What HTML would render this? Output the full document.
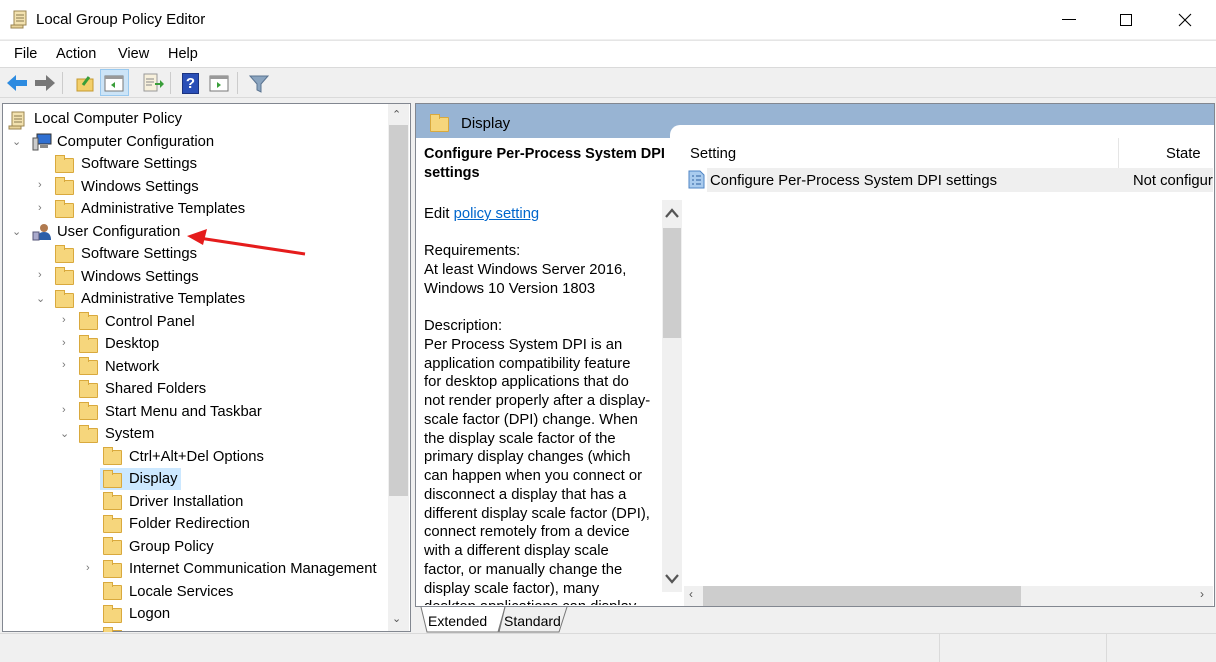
<!DOCTYPE html>
<html><head><meta charset="utf-8"><style>
*{margin:0;padding:0;box-sizing:border-box}
body{width:1216px;height:662px;overflow:hidden;background:#f0f0f0;font-family:"Liberation Sans",sans-serif;font-size:14.5px;color:#000;position:relative}
.a{position:absolute;white-space:nowrap}
.fold{position:absolute;width:19px;height:15px;background:#f6d67c;border:1px solid #d9a93d;border-radius:1px}
.fold:before{content:"";position:absolute;left:-1px;top:-4px;width:8px;height:4px;background:#f6d67c;border:1px solid #d9a93d;border-bottom:none}
.exp{position:absolute;font-size:11px;color:#777}
.t{position:absolute;white-space:nowrap;line-height:18px;font-size:14.8px}
</style></head><body>
<div class="a" style="left:0;top:0;width:1216px;height:39px;background:#fff;border-bottom:1px solid #fff"></div>
<svg class="a" style="left:10px;top:9px" width="18" height="20"><path d="M4 2h12v14H4z" fill="#f3e2b0" stroke="#9b8550"/><path d="M6 6h8M6 9h8M6 12h8" stroke="#8a7a50"/><path d="M1 16h12v3H1z" fill="#e8d39a" stroke="#9b8550"/></svg>
<div class="a" style="left:36px;top:11px;font-size:15px">Local Group Policy Editor</div>
<div class="a" style="left:1062px;top:19px;width:14px;height:1px;background:#000"></div>
<div class="a" style="left:1120px;top:14px;width:12px;height:12px;border:1px solid #000"></div>
<svg class="a" style="left:1178px;top:13px" width="14" height="14"><path d="M1 1L13 13M13 1L1 13" stroke="#000" stroke-width="1.1"/></svg>
<div class="a" style="left:0;top:40px;width:1216px;height:27px;background:#fff;border-top:1px solid #e5e5e5"></div>
<div class="a" style="left:14px;top:46px">File</div>
<div class="a" style="left:56px;top:46px">Action</div>
<div class="a" style="left:118px;top:46px">View</div>
<div class="a" style="left:168px;top:46px">Help</div>
<div class="a" style="left:0;top:67px;width:1216px;height:1px;background:#dadada"></div>
<svg class="a" style="left:6px;top:73px" width="22" height="20"><path d="M1 10L10 2v5h11v6H10v5z" fill="#2d8be0"/></svg>
<svg class="a" style="left:34px;top:73px" width="22" height="20"><path d="M21 10L12 2v5H1v6h11v5z" fill="#777"/></svg>
<div class="a" style="left:62px;top:72px;width:1px;height:22px;background:#ccc"></div>
<svg class="a" style="left:75px;top:73px" width="20" height="20"><rect x="2" y="6" width="16" height="12" fill="#f3cf6a" stroke="#c49a2f"/><path d="M8 12l6-8" stroke="#3a9e3a" stroke-width="3"/></svg>
<div class="a" style="left:100px;top:69px;width:29px;height:27px;background:#cce4f7;border:1px solid #99c9ef"></div>
<svg class="a" style="left:104px;top:75px" width="20" height="17"><rect x="1" y="1" width="18" height="15" fill="#fff" stroke="#777"/><rect x="1" y="1" width="18" height="3" fill="#999"/><path d="M11 7v6l-4-3z" fill="#3a9e3a"/></svg>
<svg class="a" style="left:142px;top:73px" width="22" height="20"><rect x="2" y="1" width="13" height="17" fill="#f7f0dc" stroke="#999"/><path d="M4 6h8M4 9h8M4 12h6" stroke="#888"/><path d="M13 10h5v-3l4 4-4 4v-3h-5z" fill="#3a9e3a"/></svg>
<div class="a" style="left:170px;top:72px;width:1px;height:22px;background:#ccc"></div>
<div class="a" style="left:182px;top:73px;width:17px;height:21px;background:#2a4fb7;border:1px solid #1b3380;color:#fff;font-weight:bold;font-size:15px;text-align:center;line-height:19px">?</div>
<svg class="a" style="left:209px;top:75px" width="20" height="17"><rect x="1" y="1" width="18" height="15" fill="#fff" stroke="#777"/><rect x="1" y="1" width="18" height="3" fill="#999"/><path d="M8 7v6l4-3z" fill="#3a9e3a"/></svg>
<div class="a" style="left:237px;top:72px;width:1px;height:22px;background:#ccc"></div>
<svg class="a" style="left:249px;top:74px" width="20" height="20"><path d="M1 2h18l-7 8v8l-4-2v-6z" fill="#8aa4bf" stroke="#5a7390"/></svg>
<div class="a" style="left:0;top:97px;width:1216px;height:1px;background:#dadada"></div>
<div class="a" style="left:2px;top:103px;width:409px;height:529px;background:#fff;border:1px solid #828790"></div>
<div class="a" style="left:388px;top:104px;width:21px;height:527px;background:#f0f0f0"></div>
<div class="a" style="left:389px;top:125px;width:19px;height:371px;background:#cdcdcd"></div>
<div class="a" style="left:392px;top:108px;font-size:11px;color:#555">&#8963;</div>
<div class="a" style="left:392px;top:612px;font-size:11px;color:#555">&#8964;</div>
<svg class="a" style="left:8px;top:110px" width="18" height="20"><path d="M4 2h12v14H4z" fill="#f3e2b0" stroke="#9b8550"/><path d="M6 6h8M6 9h8M6 12h8" stroke="#8a7a50"/><path d="M1 16h12v3H1z" fill="#e8d39a" stroke="#9b8550"/></svg>
<div class="t" style="left:34px;top:110px">Local Computer Policy</div>
<svg class="a" style="left:32px;top:133px" width="20" height="18"><rect x="5" y="1" width="14" height="10" fill="#2f6fd1" stroke="#333"/><rect x="1" y="5" width="5" height="12" fill="#ccc" stroke="#555"/><rect x="8" y="12" width="8" height="3" fill="#888"/></svg>
<div class="exp" style="left:12px;top:135px">&#8964;</div>
<div class="t" style="left:57px;top:133px">Computer Configuration</div>
<svg class="a" style="left:32px;top:223px" width="20" height="18"><circle cx="12" cy="5" r="4" fill="#b07a4f"/><path d="M5 17c0-6 3-8 7-8s7 2 7 8z" fill="#2b5ea8"/><rect x="1" y="9" width="6" height="8" fill="#aac" stroke="#557"/></svg>
<div class="exp" style="left:12px;top:225px">&#8964;</div>
<div class="t" style="left:57px;top:223px">User Configuration</div>

<div class="fold" style="left:55px;top:158px"></div><div class="t" style="left:81px;top:155px">Software Settings</div>
<div class="exp" style="left:38px;top:179px">&#8250;</div><div class="fold" style="left:55px;top:180px"></div><div class="t" style="left:81px;top:178px">Windows Settings</div>
<div class="exp" style="left:38px;top:202px">&#8250;</div><div class="fold" style="left:55px;top:203px"></div><div class="t" style="left:81px;top:200px">Administrative Templates</div>
<div class="fold" style="left:55px;top:248px"></div><div class="t" style="left:81px;top:245px">Software Settings</div>
<div class="exp" style="left:38px;top:269px">&#8250;</div><div class="fold" style="left:55px;top:270px"></div><div class="t" style="left:81px;top:268px">Windows Settings</div>
<div class="exp" style="left:36px;top:292px">&#8964;</div><div class="fold" style="left:55px;top:293px"></div><div class="t" style="left:81px;top:290px">Administrative Templates</div>
<div class="exp" style="left:62px;top:314px">&#8250;</div><div class="fold" style="left:79px;top:315px"></div><div class="t" style="left:105px;top:313px">Control Panel</div>
<div class="exp" style="left:62px;top:337px">&#8250;</div><div class="fold" style="left:79px;top:338px"></div><div class="t" style="left:105px;top:335px">Desktop</div>
<div class="exp" style="left:62px;top:359px">&#8250;</div><div class="fold" style="left:79px;top:360px"></div><div class="t" style="left:105px;top:358px">Network</div>
<div class="fold" style="left:79px;top:383px"></div><div class="t" style="left:105px;top:380px">Shared Folders</div>
<div class="exp" style="left:62px;top:404px">&#8250;</div><div class="fold" style="left:79px;top:405px"></div><div class="t" style="left:105px;top:403px">Start Menu and Taskbar</div>
<div class="exp" style="left:60px;top:427px">&#8964;</div><div class="fold" style="left:79px;top:428px"></div><div class="t" style="left:105px;top:425px">System</div>
<div class="fold" style="left:103px;top:450px"></div><div class="t" style="left:129px;top:448px">Ctrl+Alt+Del Options</div>
<div class="a" style="left:100px;top:468px;width:81px;height:22px;background:#cce8ff"></div>
<div class="fold" style="left:103px;top:473px"></div><div class="t" style="left:129px;top:470px">Display</div>
<div class="fold" style="left:103px;top:495px"></div><div class="t" style="left:129px;top:493px">Driver Installation</div>
<div class="fold" style="left:103px;top:518px"></div><div class="t" style="left:129px;top:515px">Folder Redirection</div>
<div class="fold" style="left:103px;top:540px"></div><div class="t" style="left:129px;top:538px">Group Policy</div>
<div class="exp" style="left:86px;top:562px">&#8250;</div><div class="fold" style="left:103px;top:563px"></div><div class="t" style="left:129px;top:560px">Internet Communication Management</div>
<div class="fold" style="left:103px;top:585px"></div><div class="t" style="left:129px;top:583px">Locale Services</div>
<div class="fold" style="left:103px;top:608px"></div><div class="t" style="left:129px;top:605px">Logon</div>
<div class="fold" style="left:103px;top:630px;height:1px;border-bottom:none"></div>
<svg class="a" style="left:185px;top:226px" width="125" height="35"><path d="M120 28L14 12" stroke="#e51c1c" stroke-width="3"/><path d="M2 10L22 3L18 19z" fill="#e51c1c"/></svg>

<div class="a" style="left:415px;top:103px;width:800px;height:504px;background:#fff;border:1px solid #828790"></div>
<div class="a" style="left:416px;top:104px;width:798px;height:34px;background:#98b4d3"></div>
<div class="a" style="left:670px;top:125px;width:544px;height:20px;background:#fff;border-top-left-radius:10px"></div>
<div class="fold" style="left:430px;top:117px"></div>
<div class="a" style="left:461px;top:115px;font-size:15px">Display</div>
<div class="t" style="left:424px;top:145px;font-weight:bold;font-size:14.5px;line-height:18.5px">Configure Per-Process System DPI<br>settings</div>
<div class="t" style="left:424px;top:205px">Edit <span style="color:#0066cc;text-decoration:underline">policy setting </span></div>
<div class="t" style="left:424px;top:242px;line-height:18.75px">Requirements:<br>At least Windows Server 2016,<br>Windows 10 Version 1803</div>
<div class="t" style="left:424px;top:317px;line-height:18.75px;height:288px;overflow:hidden">Description:<br>Per Process System DPI is an<br>application compatibility feature<br>for desktop applications that do<br>not render properly after a display-<br>scale factor (DPI) change. When<br>the display scale factor of the<br>primary display changes (which<br>can happen when you connect or<br>disconnect a display that has a<br>different display scale factor (DPI),<br>connect remotely from a device<br>with a different display scale<br>factor, or manually change the<br>display scale factor), many<br>desktop applications can display</div>
<div class="a" style="left:662px;top:200px;width:20px;height:392px;background:#f0f0f0"></div>
<div class="a" style="left:663px;top:228px;width:18px;height:110px;background:#cdcdcd"></div>
<svg class="a" style="left:664px;top:207px" width="16" height="12"><path d="M2 10L8 3L14 10" stroke="#555" stroke-width="2.2" fill="none"/></svg>
<svg class="a" style="left:664px;top:573px" width="16" height="12"><path d="M2 2L8 9L14 2" stroke="#555" stroke-width="2.2" fill="none"/></svg>
<div class="a" style="left:690px;top:146px;font-size:14.8px">Setting</div>
<div class="a" style="left:1118px;top:138px;width:1px;height:30px;background:#e5e5e5"></div>
<div class="a" style="left:1166px;top:146px;font-size:14.8px">State</div>
<div class="a" style="left:707px;top:168px;width:506px;height:24px;background:#efefef"></div>
<svg class="a" style="left:688px;top:170px" width="17" height="19"><path d="M1 1h11l4 4v13H1z" fill="#a9cbee" stroke="#4f85c4"/><path d="M4 6h2M8 6h5M4 10h2M8 10h5M4 14h2M8 14h5" stroke="#2d5f9e"/></svg>
<div class="a" style="left:710px;top:173px;font-size:14.8px">Configure Per-Process System DPI settings</div>
<div class="a" style="left:1133px;top:173px;width:80px;overflow:hidden;font-size:14.8px">Not configured</div>
<div class="a" style="left:684px;top:586px;width:529px;height:20px;background:#f0f0f0"></div>
<div class="a" style="left:703px;top:586px;width:318px;height:20px;background:#cdcdcd"></div>
<div class="a" style="left:689px;top:587px;font-size:12px;color:#555">&#8249;</div>
<div class="a" style="left:1200px;top:587px;font-size:12px;color:#555">&#8250;</div>
<svg class="a" style="left:415px;top:607px" width="160" height="26"><path d="M6 0L12 25H83L90 0" fill="#fff" stroke="#777"/><path d="M90 0L84 25H144L152 0" fill="#f0f0f0" stroke="#777"/></svg>
<div class="a" style="left:428px;top:613px;font-size:14px">Extended</div>
<div class="a" style="left:504px;top:613px;font-size:14px">Standard</div>
<div class="a" style="left:0;top:633px;width:1216px;height:1px;background:#dadada"></div>
<div class="a" style="left:939px;top:634px;width:1px;height:28px;background:#dadada"></div>
<div class="a" style="left:1106px;top:634px;width:1px;height:28px;background:#dadada"></div>
</body></html>
